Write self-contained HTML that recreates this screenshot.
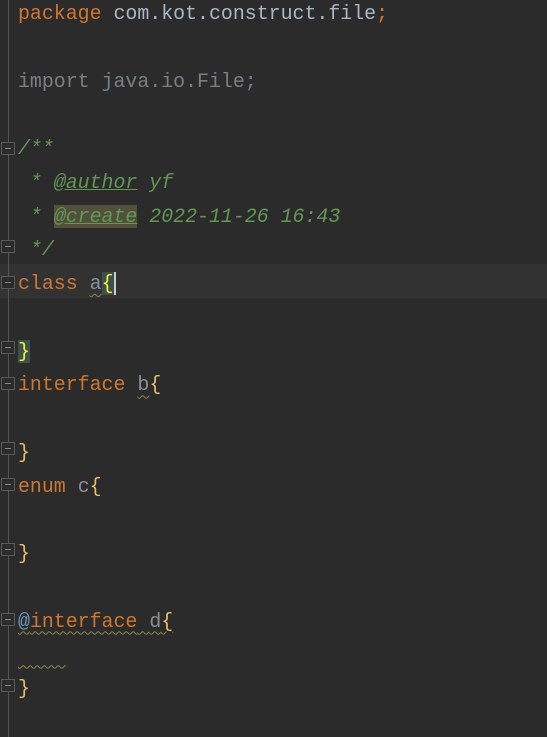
<!DOCTYPE html>
<html><head><style>
html,body{margin:0;padding:0;background:#2b2b2b;width:547px;height:737px;overflow:hidden}
.g{position:absolute;left:8px;top:0;width:1px;height:737px;background:#555}
.code{position:absolute;left:18px;top:-3px;font-family:"Liberation Mono",monospace;font-size:19.9px;line-height:33.75px;color:#a9b7c6;white-space:pre}
.l{height:33.75px;position:relative}
.cur{position:absolute;left:0;top:264px;width:547px;height:33.75px;background:#323232}
.k{color:#cc7832}.c{color:#629755;font-style:italic}
.t{text-decoration:underline}
.u{color:#7a7e85}.n{color:#8a8f96}.b{color:#e8bf6a}
.hb{background:#3b514d;color:#ffef28}
.w{text-decoration:underline wavy #8a8a50 1px;text-underline-offset:4px}
.f{position:absolute;left:1px;width:14px;height:13px;border:1px solid #5a5a5a;background:#2b2b2b;box-sizing:border-box}
.f:after{content:"";position:absolute;left:3px;top:5px;width:6px;height:1px;background:#888}
</style></head><body>
<div class="cur"></div>
<div class="g"></div>
<div class="f" style="top:142px"></div><div class="f" style="top:240px"></div>
<div class="f" style="top:276px"></div><div class="f" style="top:341px"></div>
<div class="f" style="top:377px"></div><div class="f" style="top:442px"></div>
<div class="f" style="top:478px"></div><div class="f" style="top:543px"></div>
<div class="f" style="top:613px"></div><div class="f" style="top:679px"></div>
<div class="code"><div class="l"><span class="k">package</span> com.kot.construct.file<span class="k">;</span></div><div class="l"> </div><div class="l"><span class="u">import java.io.File;</span></div><div class="l"> </div><div class="l"><span class="c">/**</span></div><div class="l"><span class="c"> * <span class="t">@author</span> yf</span></div><div class="l"><span class="c"> * <span class="t" style="background:#52503a">@create</span> 2022-11-26 16:43</span></div><div class="l"><span class="c"> */</span></div><div class="l"><span class="k">class</span> <span class="n w">a</span><span class="hb">{</span><span style="border-left:2px solid #ccc"></span></div><div class="l"> </div><div class="l"><span class="hb">}</span></div><div class="l"><span class="k">interface</span> <span class="n w">b</span><span class="b">{</span></div><div class="l"> </div><div class="l"><span class="b">}</span></div><div class="l"><span class="k">enum</span> <span class="n">c</span><span class="b">{</span></div><div class="l"> </div><div class="l"><span class="b">}</span></div><div class="l"> </div><div class="l w"><span style="color:#6897bb">@</span><span class="k">interface</span> <span class="n">d</span><span class="b">{</span></div><div class="l"><span class="w">    </span></div><div class="l"><span class="b">}</span></div></div>
</body></html>
